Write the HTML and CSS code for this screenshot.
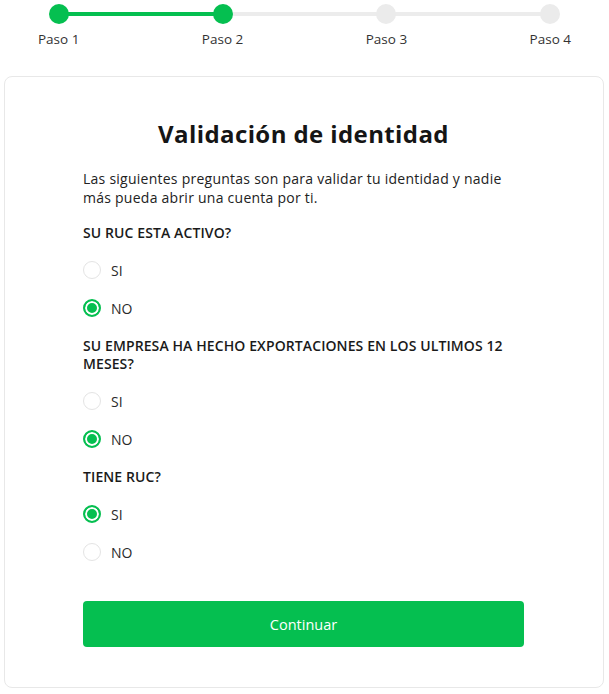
FILE: index.html
```html
<!DOCTYPE html>
<html lang="es">
<head>
<meta charset="utf-8">
<title>Validación de identidad</title>
<link rel="stylesheet" href="styles.css">
</head>
<body>
<div class="stepper">
  <div class="track"><div class="progress"></div></div>
  <div class="step done"><span class="dot"></span><span class="label">Paso 1</span></div>
  <div class="step done"><span class="dot"></span><span class="label">Paso 2</span></div>
  <div class="step"><span class="dot"></span><span class="label">Paso 3</span></div>
  <div class="step"><span class="dot"></span><span class="label">Paso 4</span></div>
</div>
<main class="card">
  <h1 class="title">Validación de identidad</h1>
  <p class="intro">Las siguientes preguntas son para validar tu identidad y nadie más pueda abrir una cuenta por ti.</p>
  <div class="question">
    <p class="q">SU RUC ESTA ACTIVO?</p>
    <label class="opt"><span class="radio"></span>SI</label>
    <label class="opt"><span class="radio on"></span>NO</label>
  </div>
  <div class="question">
    <p class="q">SU EMPRESA HA HECHO EXPORTACIONES EN LOS ULTIMOS 12 MESES?</p>
    <label class="opt"><span class="radio"></span>SI</label>
    <label class="opt"><span class="radio on"></span>NO</label>
  </div>
  <div class="question">
    <p class="q">TIENE RUC?</p>
    <label class="opt"><span class="radio on"></span>SI</label>
    <label class="opt"><span class="radio"></span>NO</label>
  </div>
  <button class="btn" type="button">Continuar</button>
</main>
</body>
</html>
```
FILE: styles.css
```css
* { box-sizing: border-box; }
body {
  margin: 0;
  background: #fff;
  font-family: "Open Sans", "Noto Sans", sans-serif;
  color: #1c1c1c;
}
.stepper {
  position: relative;
  display: flex;
  justify-content: space-between;
  padding: 4px 38px 0;
  height: 76px;
}
.track {
  position: absolute;
  left: 58px;
  right: 61px;
  top: 12px;
  height: 4px;
  background: #ececec;
}
.progress {
  width: 163px;
  height: 100%;
  background: #05bf50;
}
.step {
  position: relative;
  display: flex;
  flex-direction: column;
  align-items: center;
  gap: 7px;
}
.dot {
  width: 20px;
  height: 20px;
  border-radius: 50%;
  background: #ebebeb;
}
.step.done .dot { background: #05bf50; }
.label {
  font-size: 13.5px;
  color: #333;
  line-height: 16px;
}
.card {
  margin: 0 5px 6px 4px;
  border: 1px solid #e8e8e8;
  border-radius: 8px;
  padding: 42px 79px 41px 78px;
  height: 612px;
}
.title {
  margin: 0 0 20px;
  text-align: center;
  font-size: 24px;
  font-weight: 700;
  letter-spacing: 0.4px;
  line-height: 30px;
  color: #151515;
}
.intro {
  margin: 0 0 17px;
  font-size: 14px;
  letter-spacing: 0.25px;
  line-height: 19px;
  color: #222;
}
.question {
  display: flex;
  flex-direction: column;
  margin-top: 10px;
}
.question:first-of-type { margin-top: 0; }
.q {
  margin: 0 0 9px;
  font-size: 14px;
  font-weight: 600;
  letter-spacing: 0.1px;
  line-height: 18px;
  color: #1a1a1a;
}
.opt {
  display: flex;
  align-items: center;
  gap: 10px;
  height: 38px;
  font-size: 14px;
  color: #2a2a2a;
}
.radio {
  width: 18px;
  height: 18px;
  border-radius: 50%;
  border: 1px solid #e4e4e4;
  background: #fff;
}
.radio.on {
  border: 2px solid #05bf50;
  box-shadow: inset 0 0 0 2px #fff;
  background: #05bf50;
}
.btn {
  display: block;
  width: 100%;
  height: 46px;
  margin-top: 30px;
  border: 0;
  border-radius: 4px;
  background: #05bf50;
  color: #fff;
  font-family: inherit;
  font-size: 14.5px;
}
```
